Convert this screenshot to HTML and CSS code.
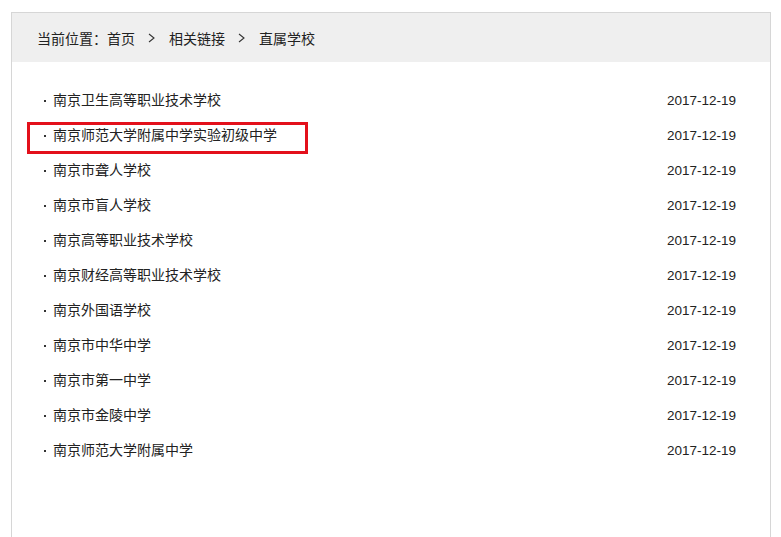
FILE: index.html
```html
<!DOCTYPE html>
<html lang="zh-CN">
<head>
<meta charset="utf-8">
<title>直属学校</title>
<link rel="stylesheet" href="styles.css">
</head>
<body>
<div class="panel">
  <div class="crumbs">
    <span>当前位置：首页</span>
    <svg class="sep" width="8" height="10" viewBox="0 0 8 10"><polyline points="1,1 6,5 1,9" fill="none" stroke="#333" stroke-width="1.1"/></svg>
    <span>相关链接</span>
    <svg class="sep" width="8" height="10" viewBox="0 0 8 10"><polyline points="1,1 6,5 1,9" fill="none" stroke="#333" stroke-width="1.1"/></svg>
    <span>直属学校</span>
  </div>
  <ul class="list">
    <li class="row"><span class="name">南京卫生高等职业技术学校</span><span class="date">2017-12-19</span></li>
    <li class="row"><span class="name">南京师范大学附属中学实验初级中学</span><span class="date">2017-12-19</span></li>
    <li class="row"><span class="name">南京市聋人学校</span><span class="date">2017-12-19</span></li>
    <li class="row"><span class="name">南京市盲人学校</span><span class="date">2017-12-19</span></li>
    <li class="row"><span class="name">南京高等职业技术学校</span><span class="date">2017-12-19</span></li>
    <li class="row"><span class="name">南京财经高等职业技术学校</span><span class="date">2017-12-19</span></li>
    <li class="row"><span class="name">南京外国语学校</span><span class="date">2017-12-19</span></li>
    <li class="row"><span class="name">南京市中华中学</span><span class="date">2017-12-19</span></li>
    <li class="row"><span class="name">南京市第一中学</span><span class="date">2017-12-19</span></li>
    <li class="row"><span class="name">南京市金陵中学</span><span class="date">2017-12-19</span></li>
    <li class="row"><span class="name">南京师范大学附属中学</span><span class="date">2017-12-19</span></li>
  </ul>
  <div class="highlight"></div>
</div>
</body>
</html>
```

FILE: styles.css
```css
html, body {
  margin: 0;
  padding: 0;
  background: #fff;
}
body {
  font-family: "Noto Sans CJK SC", "Liberation Sans", sans-serif;
  font-size: 14px;
  color: #222;
}
.panel {
  position: relative;
  box-sizing: border-box;
  width: 760px;
  min-height: 600px;
  margin: 12px 0 0 11px;
  border: 1px solid #d6d6d6;
  border-bottom: none;
}
.crumbs {
  height: 49px;
  background: #efefef;
  display: flex;
  align-items: center;
  padding-left: 25px;
  color: #222;
}
.sep {
  margin: 0 13px 0 13px;
}
.list {
  list-style: none;
  margin: 0;
  padding: 19px 0 0 0;
}
.row {
  height: 35px;
  display: flex;
  align-items: center;
  justify-content: space-between;
  padding: 0 34px 0 32px;
}
.name {
  display: flex;
  align-items: center;
}
.name::before {
  content: "";
  width: 2px;
  height: 2px;
  background: #333;
  margin: 5px 7px 0 0;
}
.date {
  font-family: "Liberation Sans", sans-serif;
  font-size: 13.5px;
  color: #222;
  margin-top: 3px;
}
.highlight {
  position: absolute;
  left: 15px;
  top: 109px;
  width: 281px;
  height: 32px;
  box-sizing: border-box;
  border: 3px solid #e3101b;
}
```
